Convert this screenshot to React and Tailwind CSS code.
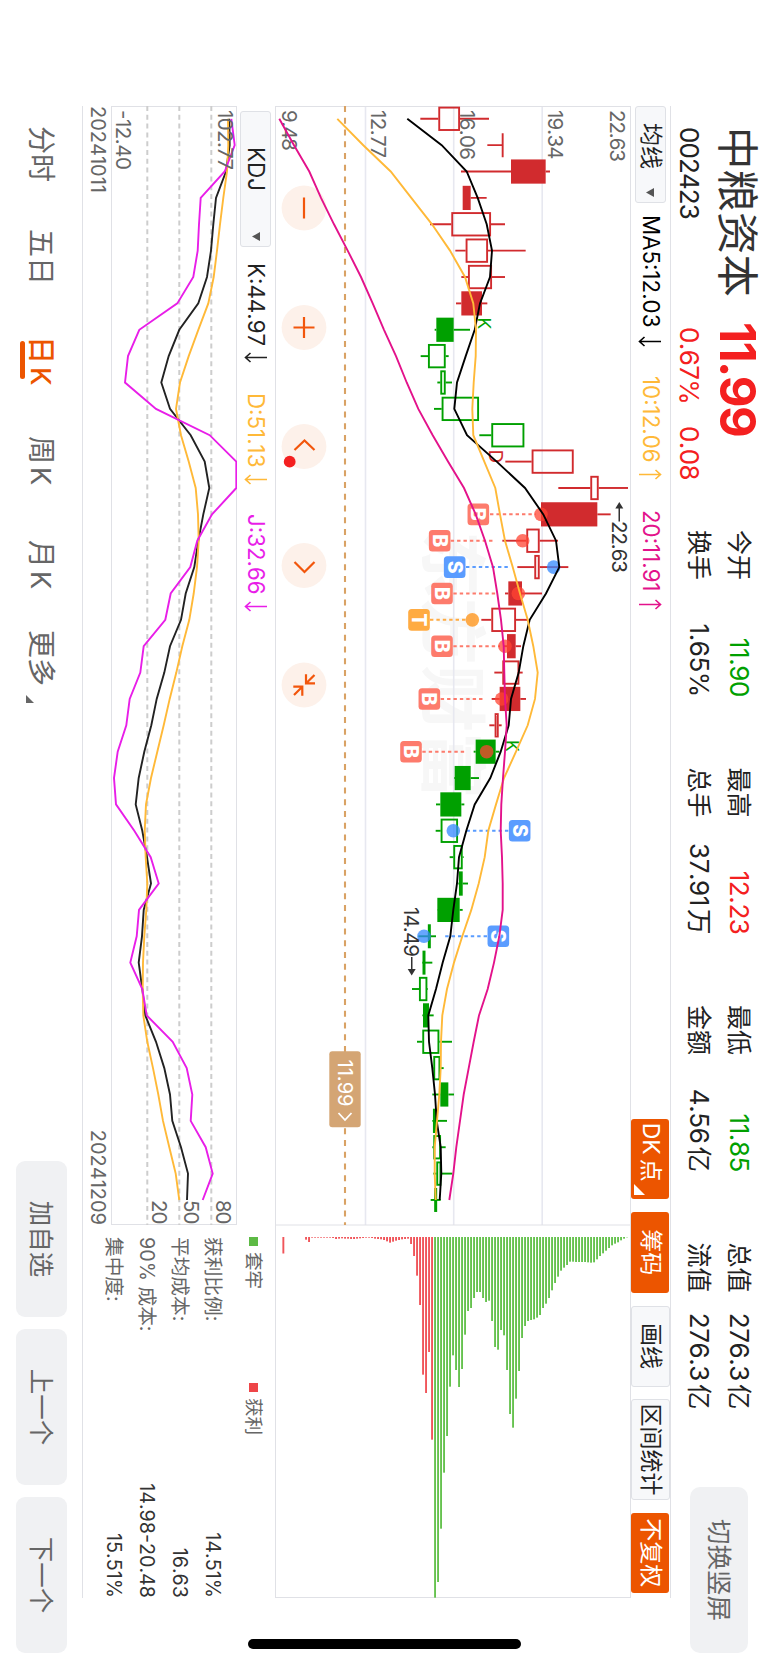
import React from "react";

const RED = "#d12b2e";
const GREEN = "#00a000";
const AMBER = "#ffb938";
const MAGENTA = "#e3128b";
const VIOLET = "#e81ee8";

const candleX = (i) => 118.8 + i * 26.37;
const priceY = (v) => 379 - v / 3;
const kdjY = (v) => 769 - v / 3;

// [kind, low, bodyLow, bodyHigh, high]; r/g = colour, h = hollow, f = filled, d = doji
const candles = [
  ["rh", 91, 145, 210, 297], ["rd", 292, 338, 338, 338], ["rf", 213, 363, 467, 480],
  ["rf", 218, 218, 242, 290], ["rh", 120, 184, 303, 345], ["rh", 196, 227, 294, 407],
  ["rh", 214, 234, 306, 345], ["rf", 198, 214, 276, 292], ["gf", 134, 139, 191, 240],
  ["gh", 92, 114, 167, 176], ["gh", 142, 151, 167, 186], ["gh", 132, 155, 267, 267],
  ["gh", 268, 304, 403, 403], ["rh", 346, 425, 551, 551], ["rh", 505, 601, 626, 714],
  ["rf", 453, 453, 622, 662], ["rh", 337, 409, 449, 504], ["rh", 382, 433, 449, 535],
  ["rf", 345, 355, 396, 456], ["rh", 274, 304, 378, 415], ["rf", 340, 351, 377, 393],
  ["rh", 313, 337, 388, 398], ["rf", 305, 329, 391, 408], ["rh", 298, 314, 326, 335],
  ["gf", 251, 257, 317, 328], ["gf", 192, 194, 242, 267], ["gf", 138, 151, 214, 223],
  ["gh", 137, 152, 204, 204], ["gh", 179, 190, 218, 221], ["gh", 205, 207, 218, 234],
  ["gf", 141, 142, 209, 218], ["gd", 85, 118, 118, 138], ["gd", 97, 102, 102, 127],
  ["gh", 66, 87, 112, 114], ["gf", 97, 99, 117, 131], ["gh", 81, 97, 148, 186],
  ["gh", 126, 130, 151, 161], ["gf", 127, 151, 175, 192], ["gh", 127, 129, 139, 171],
  ["gh", 127, 130, 153, 167], ["gh", 130, 139, 154, 187], ["gd", 122, 137, 137, 152],
];

const ma5 = [52, 155, 230, 263, 290, 306, 300, 270, 254, 227, 201, 193, 231, 320, 405, 460, 498, 508, 468, 419, 400, 386, 363, 356, 332, 301, 254, 229, 207, 201, 190, 181, 158, 138, 115, 117, 127, 135, 140, 152, 154, 149];
const ma10 = [-158, -80, 2, 64, 126, 180, 225, 250, 258, 257, 251, 247, 250, 283, 316, 330, 345, 368, 390, 413, 430, 443, 435, 413, 378, 342, 318, 295, 284, 266, 244, 217, 192, 171, 157, 153, 152, 148, 141, 134, 134, 137];
const ma20 = [-332, -288, -242, -207, -168, -127, -87, -52, -18, 18, 50, 85, 128, 174, 222, 257, 285, 309, 322, 333, 341, 343, 345, 350, 345, 339, 334, 332, 336, 338, 338, 328, 312, 293, 267, 251, 236, 221, 210, 199, 190, 178];
const kLine = [688, 689, 678, 648, 640, 633, 621, 595, 538, 506, 484, 510, 572, 614, 628, 610, 595, 583, 557, 543, 510, 493, 470, 454, 433, 416, 407, 427, 441, 453, 431, 426, 416, 427, 436, 468, 493, 510, 517, 543, 564, 561];
const dLine = [684, 685, 681, 670, 660, 651, 641, 625, 595, 566, 540, 528, 543, 566, 587, 594, 596, 591, 581, 568, 547, 529, 509, 491, 472, 453, 438, 434, 437, 442, 439, 433, 429, 428, 430, 442, 459, 475, 489, 508, 527, 538];
const jLine = [694, 704, 674, 602, 597, 593, 580, 532, 418, 384, 375, 468, 629, 709, 709, 636, 592, 571, 512, 496, 431, 421, 389, 379, 353, 342, 348, 403, 452, 476, 417, 410, 391, 427, 440, 518, 560, 577, 572, 617, 638, 608];

const chipsGreen = [1193, 1146, 986, 818, 708, 560, 466, 510, 561, 507, 404, 333, 324, 294, 276, 276, 294, 306, 302, 363, 441, 449, 390, 406, 510, 642, 683, 596, 513, 414, 378, 363, 360, 358, 353, 345, 324, 311, 294, 271, 249, 230, 212, 203, 195, 185, 185, 186, 186, 186, 186, 187, 188, 187, 178, 168, 160, 152, 144, 136, 131, 127, 121, 116, 112].map((v) => (v - 111) / 3);
const chipsRed = [719, 456, 579, 524, 315, 227, 168, 132, 116, 117, 118, 120, 122, 125, 128, 124, 120, 118, 117, 116, 114, 113, 113, 114, 115, 116, 117, 117, 116, 116, 115, 116, 117, 114, 113, 113, 113, 113, 113, 113, 113, 126, 119].map((v) => (v - 111) / 3);

const tagColors = { B: "#fd7b6c", S: "#5a9cff", T: "#ffab42" };
const dotColors = { B: "#ff4433", S: "#3388ff", T: "#ff9010" };
// [letter, candle, tag level, dash from, dash to, dot level]
const marks = [
  ["B", 15, 265, 300, 437, 453], ["B", 16, 149, 182, 312, 398], ["S", 17, 194, 228, 358, 491],
  ["B", 18, 156, 190, 322, 385], ["T", 19, 87, 120, 230, 247], ["B", 20, 156, 190, 330, 345],
  ["B", 22, 118, 152, 282, 335], ["B", 24, 63, 97, 228, 290], ["S", 27, 389, 355, 222, 190],
  ["S", 31, 325, 291, 165, 102],
];

const line = (data, y) => data.map((v, i) => `${candleX(i).toFixed(1)},${y(v).toFixed(1)}`).join(" ");

function Candle({ kind, x, low, bl, bh, high }) {
  const color = kind[0] === "r" ? RED : GREEN;
  const stroke = { stroke: color, strokeWidth: 1.9 };
  if (kind[1] === "d") {
    return (
      <g {...stroke}>
        <line x1={x} x2={x} y1={priceY(low)} y2={priceY(high)} />
        <line x1={x - 12} x2={x + 12} y1={priceY(bl)} y2={priceY(bl)} strokeWidth={kind[0] === "r" ? 1.9 : 3} />
      </g>
    );
  }
  const filled = kind[1] === "f";
  const inset = filled ? 0 : 0.9;
  return (
    <g {...stroke}>
      <line x1={x} x2={x} y1={priceY(low)} y2={priceY(bl)} />
      <line x1={x} x2={x} y1={priceY(bh)} y2={priceY(high)} />
      <rect
        x={x - 12.1 + inset}
        y={priceY(bh) + inset}
        width={24.2 - inset * 2}
        height={Math.max((bh - bl) / 3 - inset * 2, 0.8)}
        fill={filled ? color : "none"}
        stroke={filled ? "none" : color}
      />
    </g>
  );
}

function Mark({ letter, i, tag, from, to, dot }) {
  const x = candleX(i);
  return (
    <g>
      <line x1={x} x2={x} y1={priceY(from)} y2={priceY(to)} stroke={tagColors[letter]} strokeWidth="2" strokeDasharray="3.4 3" />
      <circle cx={x} cy={priceY(dot)} r="6.8" fill={dotColors[letter]} opacity="0.75" />
      <rect x={x - 10.8} y={priceY(tag) - 10.8} width="21.6" height="21.6" rx="3.5" fill={tagColors[letter]} />
      <text x={x} y={priceY(tag) + 6.9} textAnchor="middle" fontSize="19.5" fontWeight="800" fill="#fff">{letter}</text>
    </g>
  );
}

function RoundControl({ x, children }) {
  return (
    <g>
      <circle cx={x} cy="465" r="22.4" fill="#fdf1ea" />
      <g fill="none" stroke="#f2560c" strokeWidth="2.2">{children}</g>
    </g>
  );
}

function PriceChart() {
  return (
    <svg className="block h-[356px] w-[1492px]" viewBox="106 138 1492 356" fontFamily="Inter, sans-serif">
      <g transform="translate(531 341)" fill="#f7f7f7" fontSize="67" fontWeight="700" fontFamily="'Noto Sans CJK SC', sans-serif">
        <text>东方财富</text>
      </g>
      <g stroke="#e7e8f0" strokeWidth="1.6">
        <line x1="106" x2="1225" y1="226.8" y2="226.8" />
        <line x1="106" x2="1225" y1="315.3" y2="315.3" />
        <line x1="106" x2="1225" y1="403.5" y2="403.5" />
      </g>
      <g fill="none" stroke="#e0e1e6">
        <rect x="106.5" y="138.5" width="1491" height="355" />
        <line x1="1225" x2="1225" y1="138" y2="494" />
      </g>
      <RoundControl x={208}><path d="M197.5 465h21" /></RoundControl>
      <RoundControl x={327.5}><path d="M317 465h21M327.5 454.5v21" /></RoundControl>
      <RoundControl x={446.5}><path d="M450 454.5l-9.5 10 9.5 10" /></RoundControl>
      <RoundControl x={565.5}><path d="M562 454.5l10 10-10 10" /></RoundControl>
      <RoundControl x={685}>
        <path d="M675 454.5l8.3 8.3M683.3 454v9h-9M695 475l-8.3-8.3M686.7 475.7v-9h9" />
      </RoundControl>
      <circle cx="461.7" cy="479.3" r="5.9" fill="#f42020" />
      <line x1="106" x2="1225" y1="424" y2="424" stroke="#d9a264" strokeWidth="2.1" strokeDasharray="5.9 5.85" />
      <g>
        {candles.map(([kind, low, bl, bh, high], i) => (
          <Candle key={i} kind={kind} x={candleX(i)} low={low} bl={bl} bh={bh} high={high} />
        ))}
      </g>
      {marks.map(([letter, i, tag, from, to, dot]) => (
        <Mark key={i} letter={letter} i={i} tag={tag} from={from} to={to} dot={dot} />
      ))}
      <g fontSize="17.5">
        <text x="317.5" y="291.5" fill={GREEN}>K</text>
        <text x="740" y="263.3" fill={GREEN}>K</text>
        <text x="449.5" y="279.7" fontSize="19" fill={RED}>D</text>
      </g>
      <g fill="#666" fontSize="20.5">
        <text x="110" y="159" textLength="52">22.63</text>
        <text x="110" y="221" textLength="49.5">19.34</text>
        <text x="110" y="309.5" textLength="50">16.06</text>
        <text x="110" y="398" textLength="48">12.77</text>
        <text x="110" y="487.3" textLength="41">9.48</text>
      </g>
      <g fill="none" strokeWidth="1.9">
        <polyline points={line(ma5, priceY)} stroke="#000" />
        <polyline points={line(ma10, priceY)} stroke={AMBER} />
        <polyline points={line(ma20, priceY)} stroke={MAGENTA} />
      </g>
      <g fill="#333" fontSize="20.5">
        <text x="521" y="157" textLength="52">22.63</text>
        <text x="907" y="365" textLength="50">14.49</text>
        <path d="M502 149.7l6.5-4v8z M508 149h13.5v1.5h-13.5z" />
        <path d="M975.5 357.3l-6.5-4v8z M969 356.5h-12v1.5h12z" />
      </g>
      <g>
        {chipsGreen.map((h, i) => (
          <rect key={i} x="1237" y={priceY(135 + i * 9) - 1} width={h} height="1.9" fill="#66c24f" />
        ))}
        {chipsRed.map((h, i) => (
          <rect key={i} x="1237" y={priceY(126 - i * 9) - 1} width={h} height="1.9" fill="#f0555a" />
        ))}
        <rect x="1237" y="484.7" width="16.5" height="1.9" fill="#f0555a" />
      </g>
      <g>
        <rect x="1051.3" y="408.3" width="76" height="31.4" rx="3" fill="#d4a574" />
        <text x="1059.5" y="431.3" fontSize="20" fill="#fff" textLength="47">11.99</text>
        <path d="M1113 417.5l7 6.5-7 6.5" fill="none" stroke="#fff" strokeWidth="1.8" />
      </g>
    </svg>
  );
}

function KdjChart() {
  return (
    <svg className="block h-[126px] w-[1119px]" viewBox="106 532 1119 126" fontFamily="Inter, sans-serif">
      <rect x="106.5" y="532.5" width="1118" height="125" fill="none" stroke="#e0e1e6" />
      <g stroke="#cdcdcd" strokeWidth="2" strokeDasharray="5 3.8">
        <line x1="106" x2="1225" y1="557.7" y2="557.7" />
        <line x1="106" x2="1225" y1="589.7" y2="589.7" />
        <line x1="106" x2="1225" y1="621.7" y2="621.7" />
      </g>
      <g fill="none" strokeWidth="1.9">
        <polyline points={line(kLine, kdjY)} stroke="#222" />
        <polyline points={line(dLine, kdjY)} stroke={AMBER} />
        <polyline points={line(jLine, kdjY)} stroke={VIOLET} />
      </g>
      <g fill="#666" fontSize="20.5">
        <text x="110" y="551.5" textLength="60">102.77</text>
        <text x="110" y="653.5" textLength="60">-12.40</text>
        <text x="1200" y="553.5" textLength="24.5">80</text>
        <text x="1200" y="585.5" textLength="24.5">50</text>
        <text x="1200" y="617.3" textLength="24.5">20</text>
      </g>
    </svg>
  );
}

function Arrow({ up }) {
  return (
    <svg className="h-[24px] w-[11px]" viewBox="0 0 11 24" fill="none" stroke="currentColor" strokeWidth="1.6">
      <path d={up ? "M5.5 23V1.5M1 6.5l4.5-5 4.5 5" : "M5.5 1v21.5M1 17.5l4.5 5 4.5-5"} />
    </svg>
  );
}

function Reading({ className, text, up }) {
  return (
    <div className={`flex items-center justify-between whitespace-nowrap text-[22.3px] ${className}`}>
      <span>{text}</span>
      <Arrow up={up} />
    </div>
  );
}

function Stat({ label, value, unit, color }) {
  return (
    <div className="flex h-[40px] items-center justify-between">
      <span className="text-[25px]">{label}</span>
      <span className={`flex items-center text-[26px] ${color}`}>
        <span className="tracking-[-0.4px]">{value}</span>
        {unit && <span className="ml-[3px] text-[25.5px]">{unit}</span>}
      </span>
    </div>
  );
}

const stats = [
  [["今开", "11.90", "", "text-[#00a000]"], ["换手", "1.65%", "", "text-[#222]"]],
  [["最高", "12.23", "", "text-[#f42020]"], ["总手", "37.91", "万", "text-[#222]"]],
  [["最低", "11.85", "", "text-[#00a000]"], ["金额", "4.56", "亿", "text-[#222]"]],
  [["总值", "276.3", "亿", "text-[#222]"], ["流值", "276.3", "亿", "text-[#222]"]],
];

const chipInfo = [
  ["获利比例:", "14.51%"],
  ["平均成本:", "16.63"],
  ["90% 成本:", "14.98-20.48"],
  ["集中度:", "15.51%"],
];

function ToolButton({ active, className, children }) {
  return (
    <button
      className={`flex items-center justify-center whitespace-nowrap rounded-[3px] text-[23px] ${
        active ? "h-[38px] bg-[#ec5500] text-white" : "h-[39px] border border-[#dfe1e6] bg-[#f7f8fa] text-[#222]"
      } ${className}`}
    >
      {children}
    </button>
  );
}

function Header() {
  return (
    <header className="flex h-[98px] pl-[127px]">
      <div className="w-[403px]">
        <div className="flex h-[62px] items-center">
          <h1 className="w-[195px] whitespace-nowrap pt-[3px] text-[42.5px] text-[#333]">中粮资本</h1>
          <strong className="text-[49px] font-bold tracking-[-1.6px] text-[#f42020]">11.99</strong>
        </div>
        <div className="flex h-[35px] items-center text-[26px]">
          <span className="w-[200px] tracking-[-0.9px] text-[#222]">002423</span>
          <span className="w-[99px] tracking-[-0.6px] text-[#f42020]">0.67%</span>
          <span className="tracking-[-0.6px] text-[#f42020]">0.08</span>
        </div>
      </div>
      <div className="flex w-[957px] gap-[70.5px] pt-[10px] text-[#222]">
        {stats.map((group, i) => (
          <div key={i} className="w-[167px]">
            {group.map(([label, value, unit, color]) => (
              <Stat key={label} label={label} value={value} unit={unit} color={color} />
            ))}
          </div>
        ))}
      </div>
      <button className="mt-[21px] h-[58px] w-[166px] rounded-[10px] bg-[#f0f1f3] text-[25.5px] text-[#666]">切换竖屏</button>
    </header>
  );
}

function Toolbar() {
  return (
    <div className="mx-[106px] flex h-[40px] w-[1492px] items-center border-t border-[#e0e1e6]">
      <button className="flex h-[31px] w-[97px] items-center justify-between rounded-[3px] border border-[#dfe1e6] bg-[#f7f8fa] pl-[16px] pr-[5px] text-[23px] text-[#222]">
        均线
        <svg className="h-[8px] w-[9px]" viewBox="0 0 9 8"><path d="M0 0h9L4.5 8z" fill="#555" /></svg>
      </button>
      <Reading className="ml-[12px] w-[132px] text-black" text="MA5:12.03" />
      <Reading className="ml-[29px] w-[104px] text-[#ffb938]" text="10:12.06" up />
      <Reading className="ml-[30px] w-[100px] text-[#e3128b]" text="20:11.91" up />
      <div className="ml-auto flex items-center pr-[5px]">
        <ToolButton active className="relative mr-[13px] w-[80.5px] pr-[13px]">
          <span>DK</span>
          <span className="ml-[4px]">点</span>
          <svg className="absolute bottom-[3px] right-[4px] h-[11px] w-[11px]" viewBox="0 0 11 11"><path d="M11 0v11H0z" fill="#fff" /></svg>
        </ToolButton>
        <ToolButton active className="mr-[13px] w-[80.5px]">筹码</ToolButton>
        <ToolButton className="mr-[12.5px] w-[81px]">画线</ToolButton>
        <ToolButton className="mr-[12.5px] w-[101px]">区间统计</ToolButton>
        <ToolButton active className="w-[80.5px]">不复权</ToolButton>
      </div>
    </div>
  );
}

function LowerPanel() {
  return (
    <section className="mx-[106px] flex h-[193px] w-[1492px] border-b border-[#e0e1e6]">
      <div className="w-[1119px]">
        <div className="flex h-[38px] items-center pl-[5px]">
          <button className="flex h-[31px] w-[136px] items-center justify-between rounded-[3px] border border-[#dfe1e6] bg-[#f7f8fa] pl-[35px] pr-[5px] text-[22.5px] text-[#222]">
            KDJ
            <svg className="h-[8px] w-[9px]" viewBox="0 0 9 8"><path d="M0 0h9L4.5 8z" fill="#555" /></svg>
          </button>
          <Reading className="ml-[16px] w-[100px] text-[#222]" text="K:44.97" />
          <Reading className="ml-[30px] w-[92px] text-[#ffb938]" text="D:51.13" />
          <Reading className="ml-[29px] w-[98px] text-[#e81ee8]" text="J:32.66" />
        </div>
        <KdjChart />
        <div className="flex h-[25px] items-center justify-between text-[20px] text-[#666]">
          <span>20241011</span>
          <span>20241209</span>
        </div>
      </div>
      <div className="flex-1 pl-[12px]">
        <div className="mb-[4px] flex h-[42px] items-center text-[18.5px] text-[#666]">
          <i className="mr-[6px] h-[9px] w-[9px] bg-[#5dba45]" />
          <span className="w-[131px]">套牢</span>
          <i className="mr-[6px] h-[9px] w-[9px] bg-[#ee4548]" />
          <span>获利</span>
        </div>
        {chipInfo.map(([label, value]) => (
          <div key={label} className="flex h-[33px] items-center justify-between">
            <span className="text-[19.7px] text-[#666]">{label}</span>
            <span className="text-[19.7px] text-[#333]">{value}</span>
          </div>
        ))}
      </div>
    </section>
  );
}

function Footer() {
  return (
    <footer className="flex h-[82px] text-[28px] text-[#666]">
      <nav className="flex h-[82px] w-[1161px] items-center whitespace-nowrap pl-[126px]">
        <span className="w-[103px]">分时</span>
        <span className="w-[107px]">五日</span>
        <span className="relative flex w-[100px] items-center gap-[3px] font-medium text-[#ec5500]">
          <span>日</span>
          <span className="text-[27px]">K</span>
          <i className="absolute left-[5px] top-[30px] h-[5px] w-[38px] rounded-full bg-[#ec5500]" />
        </span>
        <span className="flex w-[104px] items-center gap-[3px]"><span>周</span><span className="text-[27px]">K</span></span>
        <span className="flex w-[90px] items-center gap-[3px]"><span>月</span><span className="text-[27px]">K</span></span>
        <span>更多</span>
        <svg className="ml-[9px] mt-[21px] h-[8px] w-[8px]" viewBox="0 0 8 8"><path d="M8 0v8H0z" fill="#666" /></svg>
      </nav>
      <div className="mt-[15px] flex gap-[12px] text-[25.5px]">
        {["加自选", "上一个", "下一个"].map((label) => (
          <button key={label} className="h-[51px] w-[156px] rounded-[9px] bg-[#f0f1f3]">{label}</button>
        ))}
      </div>
    </footer>
  );
}

export default function App() {
  return (
    <div className="relative h-[1665px] w-[769px] overflow-hidden bg-white">
      <main className="relative flex h-[769px] w-[1665px] origin-top-left translate-x-[769px] rotate-90 flex-col bg-white font-[Inter,'Noto_Sans_CJK_SC',sans-serif] leading-none [font-kerning:none]">
        <Header />
        <Toolbar />
        <div className="mx-[106px]"><PriceChart /></div>
        <LowerPanel />
        <Footer />
        <div className="absolute left-[1639px] top-[248px] h-[273px] w-[10px] rounded-full bg-black" />
      </main>
    </div>
  );
}
